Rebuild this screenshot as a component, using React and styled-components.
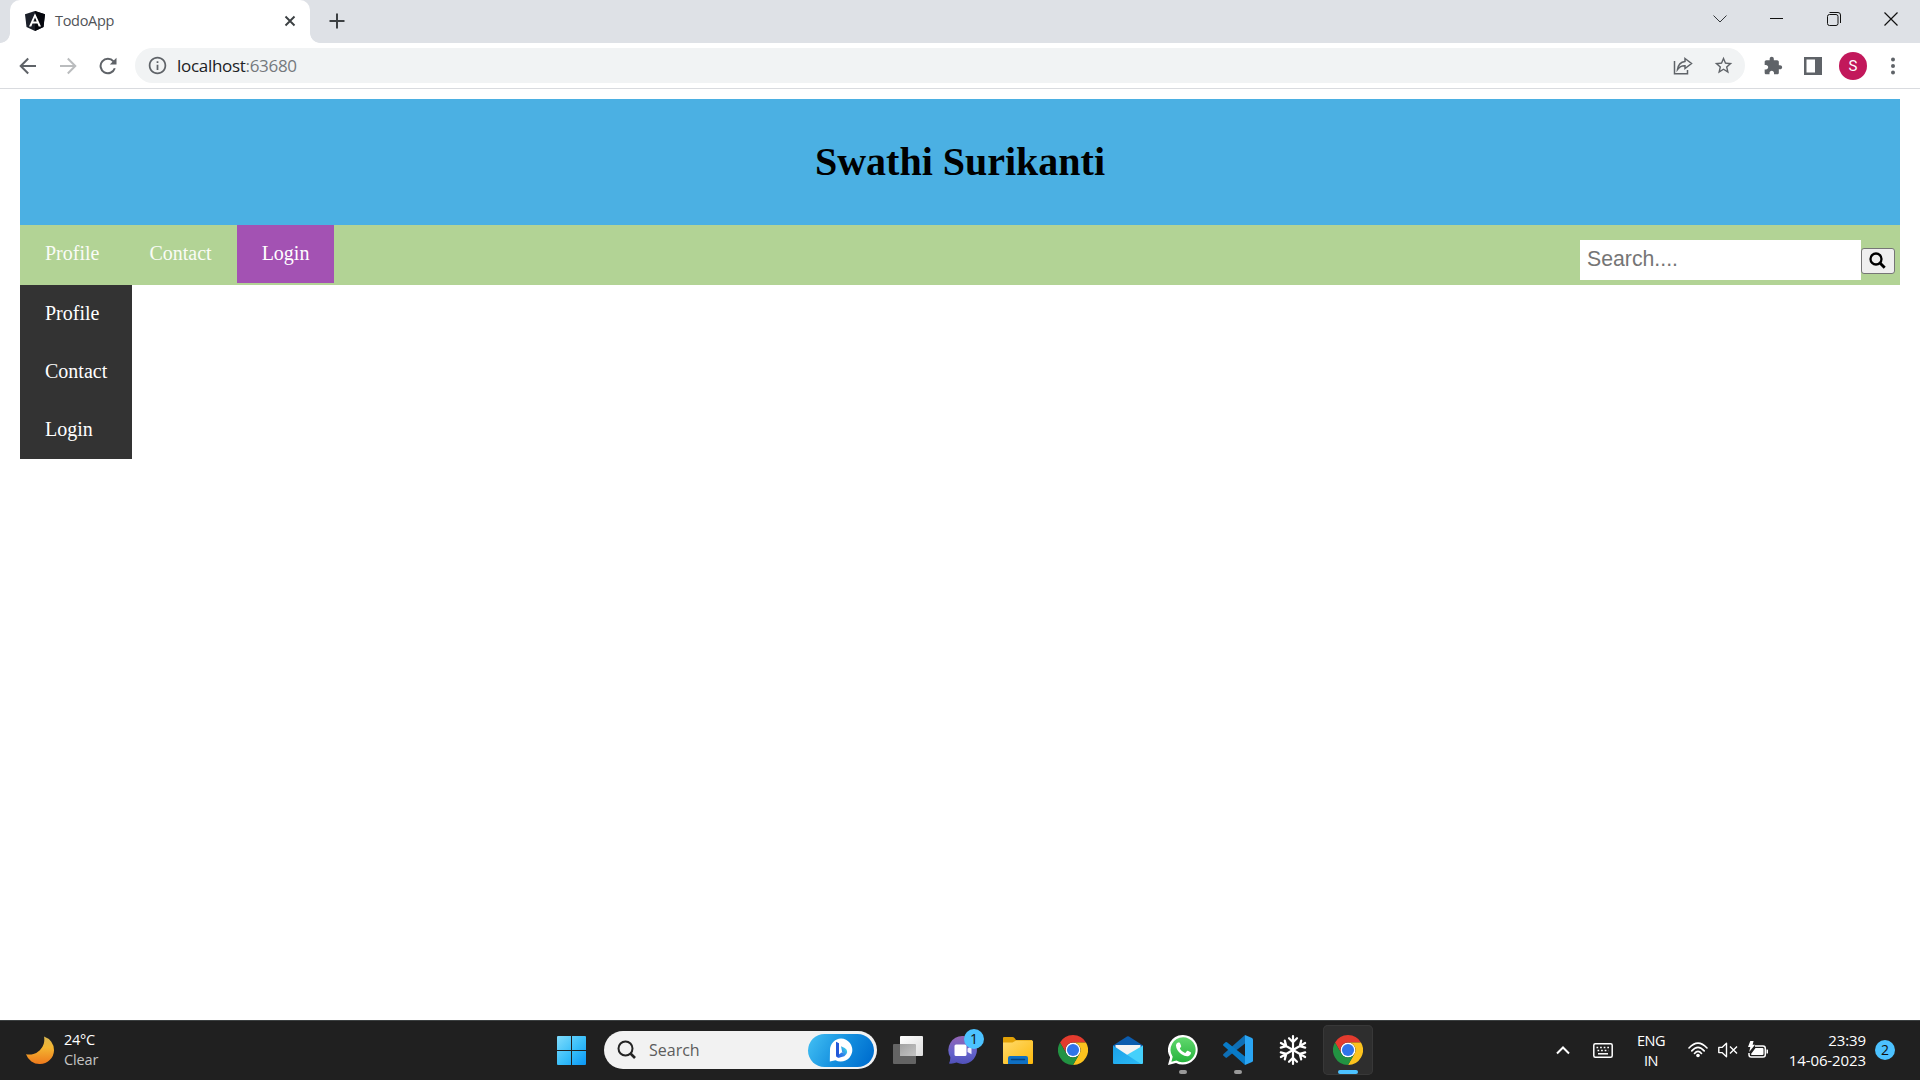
import React from "react";
import styled, { createGlobalStyle } from "styled-components";

const GlobalStyle = createGlobalStyle`
  * { box-sizing: border-box; }
  body { margin: 0; background: #fff; overflow: hidden; }
  svg { display: block; flex: none; }
`;

const ui = `"Open Sans", "Noto Sans", sans-serif`;

const Screen = styled.div`
  display: flex;
  flex-direction: column;
  width: 1920px;
  height: 1080px;
  background: #fff;
`;

/* Browser chrome */
const TabStrip = styled.div`
  display: flex;
  height: 43px;
  background: #dee1e6;
`;
const TabEdge = styled.div`
  width: 10px;
  height: 43px;
  background: radial-gradient(circle at ${(p) => (p.$right ? "100%" : "0")} 33px, #dee1e6 9.5px, #fff 10.2px);
  clip-path: inset(33px 0 0 0);
`;
const Tab = styled.div`
  display: flex;
  align-items: center;
  width: 300px;
  height: 43px;
  padding: 0 14px 1px 15px;
  border-radius: 10px 10px 0 0;
  background: #fff;
`;
const TabTitle = styled.span`
  flex: 1;
  margin-left: 10px;
  font: 400 14.5px/20px ${ui};
  letter-spacing: -0.3px;
  color: #505357;
`;
const NewTab = styled.div`
  display: flex;
  align-items: center;
  width: 30px;
  height: 42px;
  margin-left: 3px;
  padding-left: 6px;
`;
const WindowControls = styled.div`
  display: flex;
  align-items: center;
  height: 37px;
  margin-left: auto;
  padding-right: 1px;
`;
const WindowButton = styled.div`
  display: grid;
  place-items: center;
  width: 57px;
`;
const Toolbar = styled.div`
  display: flex;
  align-items: center;
  height: 46px;
  padding: 0 7px 0 8px;
  border-bottom: 1px solid #d9dbdf;
`;
const ToolButton = styled.div`
  display: grid;
  place-items: center;
  width: ${(p) => p.$w || 40}px;
  height: 35px;
`;
const AddressBar = styled.div`
  display: flex;
  align-items: center;
  width: 1610px;
  height: 35px;
  margin: 0 8px 0 7px;
  padding: 0 2px 0 12px;
  border-radius: 18px;
  background: #f1f3f4;
`;
const Url = styled.div`
  flex: 1;
  margin-left: 9px;
  font: 400 17px/24px ${ui};
  letter-spacing: -0.3px;
  color: #202124;
  span { color: #75797d; }
`;
const Avatar = styled.div`
  width: 28px;
  height: 28px;
  border-radius: 50%;
  background: #c2185b;
  color: #fff;
  font: 400 15px/28px Roboto, sans-serif;
  text-align: center;
`;

/* Web page */
const Page = styled.main`
  flex: 1;
  padding: 10px 20px;
  font-family: "Liberation Serif", serif;
`;
const Banner = styled.header`
  display: flex;
  align-items: center;
  justify-content: center;
  height: 126px;
  background: #4bb0e3;
`;
const Title = styled.h1`
  margin: 0;
  font-size: 40px;
  line-height: 46px;
  color: #000;
`;
const NavBar = styled.nav`
  display: flex;
  height: 60px;
  background: #b2d395;
`;
const NavLink = styled.a`
  height: 58px;
  padding: 17px 25px 18px;
  font-size: 20px;
  line-height: 23px;
  color: ${(p) => (p.$muted ? "#fafcf7" : "#fff")};
  background: ${(p) => (p.$active ? "#a352b3" : "transparent")};
`;
const SearchForm = styled.div`
  display: flex;
  align-items: center;
  margin: 10px 5px 0 auto;
`;
const SearchInput = styled.input`
  width: 281px;
  height: 40px;
  margin: 0;
  padding: 0 7px 2px;
  border: 0;
  background: #fff;
  font: 21.25px "Liberation Sans", Arial, sans-serif;
  &::placeholder { color: #757575; opacity: 1; }
`;
const SearchButton = styled.button`
  display: grid;
  place-items: center;
  width: 34px;
  height: 26px;
  margin-top: 2px;
  padding: 0 1px 1px 0;
  border: 1px solid #767676;
  border-radius: 3px;
  background: #efefef;
`;
const SideMenu = styled.div`
  display: flex;
  flex-direction: column;
  width: 112px;
  background: #333;
`;

/* Taskbar */
const Taskbar = styled.footer`
  display: flex;
  align-items: center;
  height: 60px;
  box-shadow: inset 0 1px 0 #3b3f40;
  background: #202020;
  color: #fff;
  font: 400 14.5px/20px ${ui};
`;
const Weather = styled.div`
  display: flex;
  align-items: center;
  gap: 10px;
  width: 555px;
  padding: 0 0 1px 26px;
  letter-spacing: -0.3px;
`;
const Muted = styled.div`
  color: #c4c4c4;
  letter-spacing: -0.15px;
`;
const TaskSearch = styled.div`
  display: flex;
  align-items: center;
  width: 273px;
  height: 38px;
  margin: 0 6px 0 16px;
  padding: 0 3px 0 13px;
  border-radius: 19px;
  background: #f2f2f2;
`;
const TaskSearchText = styled.span`
  flex: 1;
  margin-left: 12px;
  font-size: 16px;
  color: #5c5c5c;
`;
const BingPill = styled.div`
  display: grid;
  place-items: center;
  width: 66px;
  height: 33px;
  border-radius: 17px;
  background: linear-gradient(120deg, #3fbcf2 5%, #1590df 50%, #0070d0 90%);
`;
const AppRow = styled.div`
  display: flex;
  gap: 5px;
`;
const AppCell = styled.div`
  position: relative;
  display: grid;
  place-items: center;
  width: 50px;
  height: 50px;
  border-radius: 5px;
  background: ${(p) => (p.$active ? "#2e2e2e" : "transparent")};
  box-shadow: ${(p) => (p.$active ? "inset 0 0 0 1px #383838" : "none")};
`;
const Indicator = styled.i`
  position: absolute;
  bottom: 1px;
  left: 50%;
  width: ${(p) => (p.$active ? 20 : 8)}px;
  height: 4px;
  border-radius: 2px;
  background: ${(p) => (p.$active ? "#4cc2ff" : "#999")};
  transform: translateX(-50%);
`;
const CountBadge = styled.span`
  width: 20px;
  height: 20px;
  border-radius: 50%;
  background: #4cc2ff;
  color: #111;
  font: 400 14px/20px ${ui};
  text-align: center;
`;
const ChatBadge = styled(CountBadge)`
  position: absolute;
  left: 26px;
  top: 4px;
`;
const Tray = styled.div`
  display: flex;
  align-items: center;
  margin-left: auto;
  padding-right: 25px;
`;
const TrayItem = styled.div`
  display: grid;
  place-items: center;
  width: ${(p) => p.$w}px;
`;
const Language = styled.div`
  width: 56px;
  margin-right: 4px;
  padding-top: 2px;
  text-align: center;
  letter-spacing: -0.5px;
`;
const Clock = styled.div`
  width: 93px;
  margin-right: 9px;
  text-align: right;
  white-space: nowrap;
  font-size: 15px;
  letter-spacing: -0.1px;
`;

const Line = ({ w, h = w, d, color = "#202124", sw = 1 }) => (
  <svg width={w} height={h} viewBox={`0 0 ${w} ${h}`} fill="none" stroke={color} strokeWidth={sw}>
    <path d={d} />
  </svg>
);
const Glyph = ({ size, d, color = "#5f6368" }) => (
  <svg width={size} height={size} viewBox="0 0 24 24" fill={color}>
    <path d={d} />
  </svg>
);

const AngularLogo = () => (
  <svg width="20" height="20" viewBox="0 0 20 20">
    <path d="M10 0 20 3.300 18.500 16 10 20 1.500 16 0 3.300Z" fill="#1b1f29" />
    <path d="M10 0 20 3.300 18.500 16 10 20Z" fill="#05070d" />
    <path fillRule="evenodd" d="M10 2.300 4 15.500h2.300l1.200-3h5l1.200 3H16ZM10 6.500l1.700 4.100H8.300Z" fill="#fff" />
  </svg>
);

const ReloadIcon = () => (
  <svg width="18" height="18" viewBox="0 0 18 18">
    <path fill="none" stroke="#5f6368" strokeWidth="2" d="M14.500 4.300A7.300 7.300 0 1 0 15.800 11.300" />
    <path fill="#5f6368" d="M17.500 .800V7.500H10.800Z" />
  </svg>
);

const ChromeIcon = () => (
  <svg width="30" height="30" viewBox="0 0 48 48">
    <circle cx="24" cy="24" r="12" fill="#fff" />
    <path fill="#e33b2e" d="M24,12H44.7812a23.9939,23.9939,0,0,0-41.5639.0029L13.6079,30l.0093-.0024A11.9852,11.9852,0,0,1,24,12Z" />
    <path fill="#fcc31e" d="M34.3913,30.0029,24.0007,48A23.994,23.994,0,0,0,44.78,12.0031H23.9989l-.0025.0093A11.985,11.985,0,0,1,34.3913,30.0029Z" />
    <path fill="#229342" d="M13.6086,30.0031,3.218,12.006A23.994,23.994,0,0,0,24.0025,48L34.3931,30.0029l-.0067-.0068a11.9852,11.9852,0,0,1-20.7778.007Z" />
    <circle cx="24" cy="24" r="9.7" fill="#2f74ea" />
  </svg>
);

const MoonIcon = () => (
  <svg width="28" height="28" viewBox="0 0 28 28">
    <defs>
      <linearGradient id="moon" x1="0" y1="0" x2="0" y2="1">
        <stop offset="0" stopColor="#d9b650" />
        <stop offset=".4" stopColor="#f3b531" />
        <stop offset="1" stopColor="#ef7a1c" />
      </linearGradient>
    </defs>
    <path fill="url(#moon)" d="M18 0.500A14.500 14.500 0 0 1 28 14.500 14 14 0 0 1 14 28 14.500 14.500 0 0 1 0 18.200 15 15 0 0 0 18 0.500Z" />
  </svg>
);

const WindowsLogo = () => (
  <svg width="29" height="29" viewBox="0 0 29 29">
    <defs>
      <linearGradient id="win" gradientUnits="userSpaceOnUse" x1="0" y1="0" x2="29" y2="29">
        <stop offset="0" stopColor="#80dcfc" />
        <stop offset=".55" stopColor="#36bdf9" />
        <stop offset="1" stopColor="#0a96f5" />
      </linearGradient>
    </defs>
    <path fill="url(#win)" d="M1 0h13v14H0V1Q0 0 1 0ZM15 0h13q1 0 1 1v13H15ZM0 15h14v14H1q-1 0-1-1ZM15 15h14v13q0 1-1 1H15Z" />
  </svg>
);

const BingIcon = () => (
  <svg width="24" height="24" viewBox="0 0 24 24">
    <defs>
      <linearGradient id="bing" gradientUnits="userSpaceOnUse" x1="7" y1="18" x2="18" y2="10">
        <stop offset="0" stopColor="#2a5be0" />
        <stop offset=".5" stopColor="#2f86ea" />
        <stop offset="1" stopColor="#3ce0e6" />
      </linearGradient>
    </defs>
    <path fill="#fff" d="M12 .500A11.500 11.500 0 1 1 6.500 22.200L.800 23.500 1 12A11.500 11.500 0 0 1 12 .500Z" />
    <path fill="none" stroke="url(#bing)" strokeWidth="2.900" strokeLinejoin="round" d="M14.200 15.200 9.800 18.100Q8.700 18.500 8.600 17.200" />
    <path fill="#2358d8" d="M7 3.700 10 5.200V17.300Q9.800 19 8.600 19 7 18.800 7 17Z" />
    <path fill="url(#bing)" d="m12 8.300 3.800 1.700q2.500 1.300 2.400 4-.300 2.800-2.900 4.200l-4.500 1.400q-1.500 0-2.300-.800l6-3.900-1.300-.900Z" />
  </svg>
);

const TaskViewIcon = () => (
  <svg width="30" height="28" viewBox="0 0 30 28">
    <defs>
      <linearGradient id="pane" x1="0" y1="0" x2="1" y2="1">
        <stop offset="0" stopColor="#fff" />
        <stop offset="1" stopColor="#ddd" />
      </linearGradient>
      <linearGradient id="overlap" x1="0" y1="0" x2="1" y2="1">
        <stop offset="0" stopColor="#a2a2a2" />
        <stop offset="1" stopColor="#c4c4c4" />
      </linearGradient>
    </defs>
    <rect y="8" width="23" height="20" rx="1" fill="#646464" />
    <rect x="7" width="23" height="20" rx="1" fill="url(#pane)" />
    <path d="M7 8h15q1 0 1 1v11H7Z" fill="url(#overlap)" />
  </svg>
);

const ChatIcon = () => (
  <svg width="30" height="30" viewBox="0 0 30 30">
    <defs>
      <linearGradient id="chat" x1="0" y1="0" x2="0" y2="1">
        <stop offset="0" stopColor="#9465b4" />
        <stop offset=".6" stopColor="#6463cc" />
        <stop offset="1" stopColor="#5050b8" />
      </linearGradient>
    </defs>
    <path fill="url(#chat)" d="M15 1A14 14 0 1 1 8.600 27.500Q5 29 1 28.500 2.500 25.500 2.300 22A14 14 0 0 1 15 1Z" />
    <rect x="6.500" y="9.500" width="12" height="11.500" rx="1.500" fill="#fff" />
    <path d="m19.500 13.500 4-2.200v8l-4-2.200Z" fill="#f2effa" />
  </svg>
);

const FolderIcon = () => (
  <svg width="30" height="27" viewBox="0 0 30 27">
    <defs>
      <linearGradient id="folder" x1="0" y1="0" x2="1" y2="1">
        <stop offset="0" stopColor="#ffda6c" />
        <stop offset="1" stopColor="#fdb90b" />
      </linearGradient>
    </defs>
    <path fill="#e2a106" d="M1 0h8.500q1 0 2 1L13 3h16v6H0V1Q0 0 1 0Z" />
    <path fill="url(#folder)" d="M0 5.500h9.500L13 3.500h16q1 0 1 1V26q0 1-1 1H1q-1 0-1-1Z" />
    <path fill="#0f70c4" d="M5 27v-6q0-2 2-2h16q2 0 2 2v6Z" />
    <path d="M8.500 22.500h13" stroke="#06427c" strokeWidth="1.500" strokeLinecap="round" />
  </svg>
);

const MailIcon = () => (
  <svg width="30" height="28" viewBox="0 0 30 28">
    <defs>
      <linearGradient id="mail" x1="0" y1="0" x2="1" y2="1">
        <stop offset="0" stopColor="#1aa0e8" />
        <stop offset="1" stopColor="#2bb9f5" />
      </linearGradient>
    </defs>
    <path fill="#0b5cae" d="M0 9.500 14 .500q1-.500 2 0L30 9.500V12H0Z" />
    <path fill="#f3f3f3" d="M2.500 9h25v5L15 20 2.500 14Z" />
    <path fill="#45d0fb" d="M30 9.500V27q0 1-1 1H1L15 18.300Z" />
    <path fill="url(#mail)" d="M0 9.500 28 28H1q-1 0-1-1Z" />
  </svg>
);

const WhatsAppIcon = () => (
  <svg width="30" height="30" viewBox="0 0 30 30">
    <defs>
      <linearGradient id="wa" x1="0" y1="0" x2="0" y2="1">
        <stop offset="0" stopColor="#61d86e" />
        <stop offset="1" stopColor="#26b43c" />
      </linearGradient>
    </defs>
    <path fill="#fff" d="M15.200 0A14.800 14.800 0 1 1 8 27.900L0 30 2.100 22.300A14.800 14.800 0 0 1 15.200 0Z" />
    <path fill="url(#wa)" d="M15.200 2.300A12.500 12.500 0 1 1 8.500 25.400L3.400 26.700 4.700 21.700A12.500 12.500 0 0 1 15.200 2.300Z" />
    <path
      transform="translate(4.800 4.300) scale(.78)"
      fill="#fff"
      d="M4 7.500Q4.500 4.500 6.700 4H8.200Q8.900 4 9.200 4.800L10.700 8.500Q10.900 9 10.500 9.700L9.200 11.500Q9 12 9.300 12.500 11.500 16 15.200 17.400 15.900 17.700 16.300 17.200L18.200 15Q18.600 14.500 19.300 14.800L22.900 16.600Q23.500 17 23.400 17.700 22.800 21 19.700 21.700 16 22.500 10.600 18.700 4.500 14 4 7.500Z"
    />
  </svg>
);

const VSCodeIcon = () => (
  <svg width="30" height="30" viewBox="0 0 30 30">
    <path fill="#0f6fb5" d="M22 0v8.500L4 22.600q-.800.600-1.500 0L.500 20.800q-.900-.900 0-1.700Z" />
    <path fill="#087bc8" d="M22 30v-8.500L4 7.300q-.800-.600-1.500 0L.500 9.100q-.900.900 0 1.700Z" />
    <path fill="#2aa5f3" d="m22 0 7 3q1 .500 1 1.500v21q0 1-1 1.500l-7 3Z" />
  </svg>
);

const SnowflakeIcon = () => (
  <svg width="32" height="32" viewBox="0 0 32 32" fill="none" stroke="#fff" strokeWidth="2.200" strokeLinecap="round" strokeLinejoin="round">
    {[0, 60, 120, 180, 240, 300].map((a) => (
      <path key={a} transform={`rotate(${a} 16 16)`} d="M16 16V2M12 4.200 16 8.200l4-4" />
    ))}
  </svg>
);

const KeyboardIcon = () => (
  <svg width="20" height="15" viewBox="0 0 20 15" fill="none" stroke="#fff" strokeWidth="1.500">
    <rect x=".8" y=".8" width="18.400" height="13.400" rx="1.500" />
    <path d="M3.500 4.500h13M4.500 7.500h11" strokeDasharray="1.700 1.900" strokeWidth="1.700" />
    <path d="M5 10.800h10" />
  </svg>
);

const WifiIcon = () => (
  <svg width="20" height="16" viewBox="0 0 20 16" fill="none" stroke="#fff" strokeWidth="1.600" strokeLinecap="round">
    <path d="M1 6Q10-3.800 19 6M3.800 8.900Q10 1.800 16.200 8.900M6.500 11.500Q10 7.200 13.500 11.500" />
    <circle cx="10" cy="13.500" r="1.800" fill="#fff" stroke="none" />
  </svg>
);

const SpeakerIcon = () => (
  <svg width="20" height="16" viewBox="0 0 20 16" fill="none" stroke="#fff" strokeWidth="1.400" strokeLinejoin="round">
    <path d="M.800 5.400h3.200L8.500 1.300v13.400L4 10.600H.800Z" />
    <path d="m12 4.500 7 7M19 4.500l-7 7" />
  </svg>
);

const BatteryIcon = () => (
  <svg width="20" height="18" viewBox="0 0 20 18">
    <path fill="none" stroke="#fff" strokeWidth="1.500" d="M7 5h8q2.300 0 2.300 2.300v6.400Q17.300 16 15 16H3.300Q1 16 1 13.700V12" />
    <path fill="#fff" d="M7.500 7h7q1 0 1 1v5q0 1-1 1H4q-1-.200-1-1ZM18.500 8.500h1q.500 0 .500.500v3q0 .500-.500.500h-1ZM2.300 0h3.300L4.600 3.700H7L1.200 11 2.300 6H0Z" />
  </svg>
);

const links = ["Profile", "Contact", "Login"];
const apps = [
  { icon: <TaskViewIcon /> },
  { icon: <ChatIcon />, badge: "1" },
  { icon: <FolderIcon /> },
  { icon: <ChromeIcon /> },
  { icon: <MailIcon /> },
  { icon: <WhatsAppIcon />, running: true },
  { icon: <VSCodeIcon />, running: true },
  { icon: <SnowflakeIcon /> },
  { icon: <ChromeIcon />, running: true, active: true },
];

export default function App() {
  return (
    <Screen>
      <GlobalStyle />
      <TabStrip>
        <TabEdge />
        <Tab>
          <AngularLogo />
          <TabTitle>TodoApp</TabTitle>
          <Line w={12} d="m1.500 1.500 9 9M10.500 1.500l-9 9" color="#3c4043" sw={1.9} />
        </Tab>
        <TabEdge $right />
        <NewTab>
          <Line w={16} d="M8 .500v15M.500 8h15" color="#3c4043" sw={2} />
        </NewTab>
        <WindowControls>
          <WindowButton>
            <Line w={14} h={8} d="m.500.500 6.500 6.500L13.500.500" color="#33363a" />
          </WindowButton>
          <WindowButton>
            <Line w={13} h={1} d="M0 .500h13" color="#111" />
          </WindowButton>
          <WindowButton>
            <Line w={14} d="M2.500.500H11Q13.500.500 13.500 3v8M2.500 2.500h6.500q2 0 2 2v7q0 2-2 2h-6.500q-2 0-2-2v-7q0-2 2-2Z" color="#111" />
          </WindowButton>
          <WindowButton>
            <Line w={14} d="m.500.500 13 13M13.500.500l-13 13" color="#111" sw={1.2} />
          </WindowButton>
        </WindowControls>
      </TabStrip>
      <Toolbar>
        <ToolButton>
          <Line w={18} d="M17 9H2M9.200 1.500 1.700 9l7.500 7.500" color="#5f6368" sw={2} />
        </ToolButton>
        <ToolButton>
          <Line w={18} d="M1 9h15M8.800 1.500 16.300 9l-7.500 7.500" color="#babcbe" sw={2} />
        </ToolButton>
        <ToolButton>
          <ReloadIcon />
        </ToolButton>
        <AddressBar>
          <Glyph
            size={21}
            d="M11 7h2v2h-2zm0 4h2v6h-2zm1-9C6.480 2 2 6.480 2 12s4.480 10 10 10 10-4.480 10-10S17.520 2 12 2zm0 18c-4.410 0-8-3.590-8-8s3.590-8 8-8 8 3.590 8 8-3.590 8-8 8z"
          />
          <Url>
            localhost<span>:63680</span>
          </Url>
          <ToolButton>
            <svg width="20" height="18" viewBox="0 0 20 18" fill="none" stroke="#5f6368" strokeWidth="1.500">
              <path d="M1.500 4v12.800h13V13M12 1.500 18.500 6.500l-6.500 5V8.800Q7.500 8.500 4.500 12.500 5.500 5 12 4.400Z" />
            </svg>
          </ToolButton>
          <ToolButton>
            <Glyph
              size={21}
              d="M22 9.240l-7.190-.62L12 2 9.190 8.630 2 9.240l5.460 4.730L5.820 21 12 17.270 18.180 21l-1.630-7.030L22 9.240zM12 15.400l-3.760 2.270 1-4.280-3.320-2.880 4.380-.38L12 6.100l1.710 4.040 4.380.38-3.320 2.880 1 4.280L12 15.400z"
            />
          </ToolButton>
        </AddressBar>
        <ToolButton>
          <Glyph
            size={20}
            d="M20.500 11H19V7c0-1.100-.9-2-2-2h-4V3.500C13 2.120 11.880 1 10.500 1S8 2.120 8 3.500V5H4c-1.100 0-1.990.9-1.990 2v3.800H3.500c1.490 0 2.700 1.210 2.700 2.700s-1.210 2.700-2.700 2.700H2V20c0 1.100.9 2 2 2h3.800v-1.500c0-1.490 1.210-2.700 2.700-2.700 1.490 0 2.700 1.210 2.700 2.700V22H17c1.100 0 2-.9 2-2v-4h1.500c1.380 0 2.500-1.120 2.500-2.500S21.880 11 20.500 11z"
          />
        </ToolButton>
        <ToolButton>
          <svg width="18" height="18" viewBox="0 0 18 18">
            <path fillRule="evenodd" fill="#5f6368" d="M0 0h18v18H0ZM2.500 2.500v13h8.500v-13Z" />
          </svg>
        </ToolButton>
        <ToolButton>
          <Avatar>S</Avatar>
        </ToolButton>
        <ToolButton $w={40}>
          <svg width="4" height="18" viewBox="0 0 4 18" fill="#5f6368">
            <circle cx="2" cy="2.500" r="2" />
            <circle cx="2" cy="9" r="2" />
            <circle cx="2" cy="15.500" r="2" />
          </svg>
        </ToolButton>
      </Toolbar>

      <Page>
        <Banner>
          <Title>Swathi Surikanti</Title>
        </Banner>
        <NavBar>
          {links.map((l) => (
            <NavLink key={l} $active={l === "Login"} $muted={l !== "Login"}>{l}</NavLink>
          ))}
          <SearchForm>
            <SearchInput placeholder="Search...." />
            <SearchButton>
              <svg width="17" height="17" viewBox="0 0 17 17" fill="none" stroke="#000">
                <circle cx="7" cy="7" r="5.500" strokeWidth="2.300" />
                <path d="m11 11 4.700 4.700" strokeWidth="2.900" />
              </svg>
            </SearchButton>
          </SearchForm>
        </NavBar>
        <SideMenu>
          {links.map((l) => (
            <NavLink key={l}>{l}</NavLink>
          ))}
        </SideMenu>
      </Page>

      <Taskbar>
        <Weather>
          <MoonIcon />
          <div>
            24°C
            <Muted>Clear</Muted>
          </div>
        </Weather>
        <TrayItem $w={33}>
          <WindowsLogo />
        </TrayItem>
        <TaskSearch>
          <svg width="20" height="20" viewBox="0 0 20 20" fill="none" stroke="#242424">
            <circle cx="8.500" cy="8.500" r="7" strokeWidth="2" />
            <path d="m13 13 5 5" strokeWidth="2.600" />
          </svg>
          <TaskSearchText>Search</TaskSearchText>
          <BingPill>
            <BingIcon />
          </BingPill>
        </TaskSearch>
        <AppRow>
          {apps.map((a, i) => (
            <AppCell key={i} $active={a.active}>
              {a.icon}
              {a.badge && <ChatBadge>{a.badge}</ChatBadge>}
              {a.running && <Indicator $active={a.active} />}
            </AppCell>
          ))}
        </AppRow>
        <Tray>
          <TrayItem $w={40}>
            <Line w={14} h={9} d="m1 7.500 6-6 6 6" color="#fff" sw={2} />
          </TrayItem>
          <TrayItem $w={40}>
            <KeyboardIcon />
          </TrayItem>
          <Language>
            ENG
            <br />
            IN
          </Language>
          <TrayItem $w={30}>
            <WifiIcon />
          </TrayItem>
          <TrayItem $w={30}>
            <SpeakerIcon />
          </TrayItem>
          <TrayItem $w={30}>
            <BatteryIcon />
          </TrayItem>
          <Clock>
            23:39
            <br />
            14-06-2023
          </Clock>
          <CountBadge>2</CountBadge>
        </Tray>
      </Taskbar>
    </Screen>
  );
}
